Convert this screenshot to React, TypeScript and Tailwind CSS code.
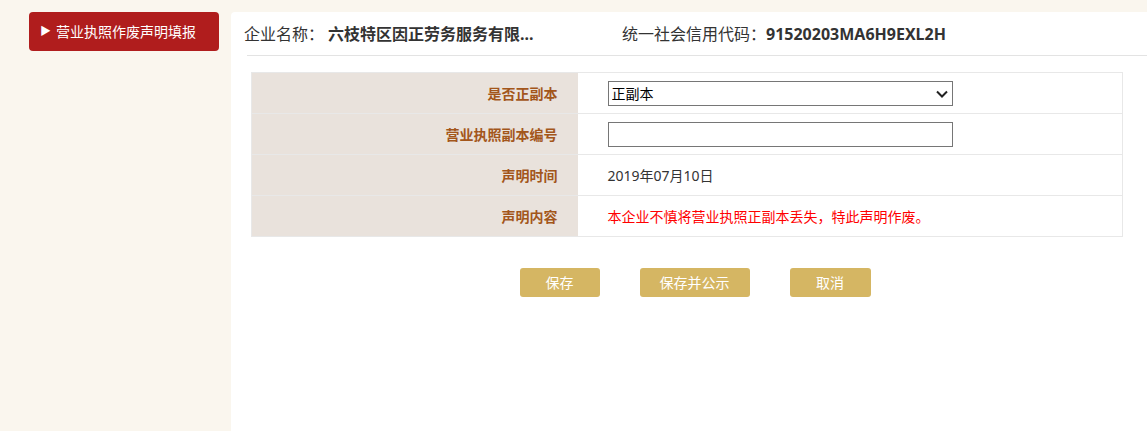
import { useState } from "react";

const FONT = "font-['Microsoft_YaHei','Noto_Sans','Noto_Sans_CJK_SC',sans-serif]";

interface Row {
  label: string;
  kind: "select" | "input" | "text" | "notice";
  value?: string;
}

const rows: Row[] = [
  { label: "是否正副本", kind: "select", value: "正副本" },
  { label: "营业执照副本编号", kind: "input" },
  { label: "声明时间", kind: "text", value: "2019年07月10日" },
  { label: "声明内容", kind: "notice", value: "本企业不慎将营业执照正副本丢失，特此声明作废。" },
];

export default function App() {
  const [copyType, setCopyType] = useState("正副本");
  const [copyNo, setCopyNo] = useState("");

  return (
    <div className={`${FONT} flex h-[431px] w-full bg-[#faf6ee] text-[#333]`}>
      {/* SIDEBAR */}
      <div className="w-[231px] shrink-0 pt-3 pl-[29px]">
        <div className="flex h-[39px] w-[190px] items-center rounded-[4px] bg-[#b01d1d] pl-[11px] text-[14px] text-white">
          <span className="mr-[5px] text-[11px]">▶</span>
          营业执照作废声明填报
        </div>
      </div>

      {/* MAIN PANEL */}
      <div className="mt-3 flex-1 rounded-tl-[4px] bg-white">
        <div className="ml-4 flex h-[44px] items-center border-b border-[#e3e3e3] text-[16px]">
          <div className="-ml-[3px] w-[378px]">
            企业名称：
            <span className="ml-1 font-bold">六枝特区因正劳务服务有限...</span>
          </div>
          <div>
            统一社会信用代码：
            <span className="font-bold">91520203MA6H9EXL2H</span>
          </div>
        </div>

        <div className="mt-4 mr-6 ml-5">
          <table className="w-full border-collapse border border-[#e8e8e8] text-[14px]">
            <tbody>
              {rows.map((row) => (
                <tr key={row.label} className="h-[41px] border-b border-[#e8e8e8]">
                  <td className="w-[326px] bg-[#e9e2dc] pr-5 text-right font-bold text-[#a3561b]">
                    {row.label}
                  </td>
                  <td className="pl-[30px]">
                    {row.kind === "select" && (
                      <div className="relative w-[345px]">
                        <select
                          value={copyType}
                          onChange={(e) => setCopyType(e.target.value)}
                          className="block h-[25px] w-full appearance-none border border-[#767676] bg-white pl-[3px] text-[14px] text-black"
                        >
                          <option>正副本</option>
                          <option>正本</option>
                          <option>副本</option>
                        </select>
                        <svg
                          className="pointer-events-none absolute top-[9px] right-[5px]"
                          width="12"
                          height="8"
                          viewBox="0 0 12 8"
                        >
                          <path d="M1 1.5 L6 6.5 L11 1.5" fill="none" stroke="#222" strokeWidth="2" />
                        </svg>
                      </div>
                    )}
                    {row.kind === "input" && (
                      <input
                        value={copyNo}
                        onChange={(e) => setCopyNo(e.target.value)}
                        className="block h-[25px] w-[345px] border border-[#767676] bg-white px-1 text-[14px]"
                      />
                    )}
                    {row.kind === "text" && <span className="text-[#333]">{row.value}</span>}
                    {row.kind === "notice" && <span className="text-[#ff0000]">{row.value}</span>}
                  </td>
                </tr>
              ))}
            </tbody>
          </table>
        </div>

        {/* ACTIONS */}
        <div className="mt-[31px] flex justify-center gap-10 pl-[12px] text-[14px] text-white">
          <button className="h-[29px] w-[80px] rounded-[3px] bg-[#d5b663]">保存</button>
          <button className="h-[29px] w-[110px] rounded-[3px] bg-[#d5b663]">保存并公示</button>
          <button className="h-[29px] w-[81px] rounded-[3px] bg-[#d5b663]">取消</button>
        </div>
      </div>
    </div>
  );
}
